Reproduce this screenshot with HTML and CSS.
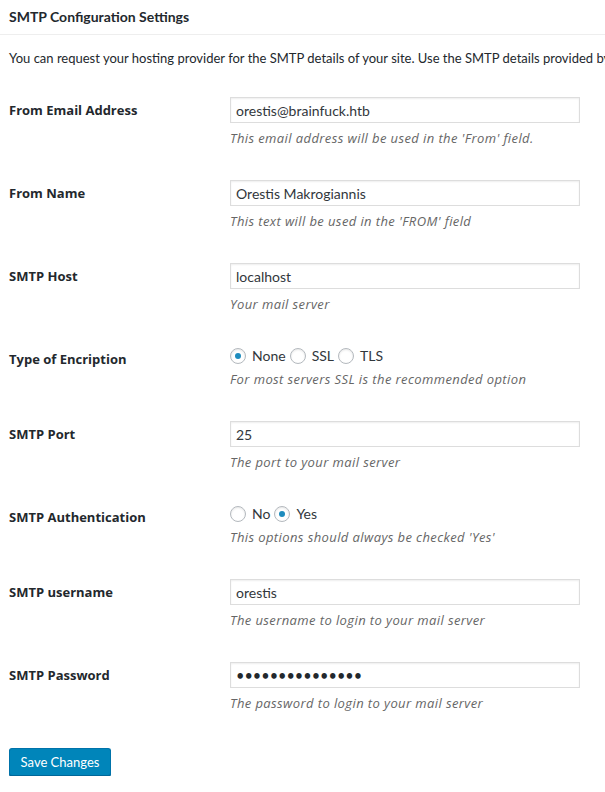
FILE: index.html
```html
<!DOCTYPE html>
<html>
<head>
<meta charset="utf-8">
<link rel="stylesheet" href="styles.css">
</head>
<body>
<div class="page">
  <div class="head"><h3 class="title">SMTP Configuration Settings</h3></div>
  <p class="intro">You can request your hosting provider for the SMTP details of your site. Use the SMTP details provided by your hosting provider to configure the following settings.</p>
  <div class="form">
    <div class="row">
      <div class="label">From Email Address</div>
      <div class="field">
        <input class="text" type="text" value="orestis@brainfuck.htb">
        <p class="desc">This email address will be used in the 'From' field.</p>
      </div>
    </div>
    <div class="row">
      <div class="label">From Name</div>
      <div class="field">
        <input class="text" type="text" value="Orestis Makrogiannis">
        <p class="desc">This text will be used in the 'FROM' field</p>
      </div>
    </div>
    <div class="row">
      <div class="label">SMTP Host</div>
      <div class="field">
        <input class="text" type="text" value="localhost">
        <p class="desc">Your mail server</p>
      </div>
    </div>
    <div class="row">
      <div class="label">Type of Encription</div>
      <div class="field">
        <div class="radios">
          <span class="radio checked"></span><span class="opt">None</span><span class="radio"></span><span class="opt">SSL</span><span class="radio"></span><span class="opt">TLS</span>
        </div>
        <p class="desc">For most servers SSL is the recommended option</p>
      </div>
    </div>
    <div class="row">
      <div class="label">SMTP Port</div>
      <div class="field">
        <input class="text" type="text" value="25">
        <p class="desc">The port to your mail server</p>
      </div>
    </div>
    <div class="row">
      <div class="label">SMTP Authentication</div>
      <div class="field">
        <div class="radios">
          <span class="radio"></span><span class="opt">No</span><span class="radio checked"></span><span class="opt">Yes</span>
        </div>
        <p class="desc">This options should always be checked 'Yes'</p>
      </div>
    </div>
    <div class="row">
      <div class="label">SMTP username</div>
      <div class="field">
        <input class="text" type="text" value="orestis">
        <p class="desc">The username to login to your mail server</p>
      </div>
    </div>
    <div class="row">
      <div class="label">SMTP Password</div>
      <div class="field">
        <input class="text pass" type="password" value="kIEnnfEKJ#)$LNx">
        <p class="desc">The password to login to your mail server</p>
      </div>
    </div>
  </div>
  <div class="actions"><button class="button">Save Changes</button></div>
</div>
</body>
</html>
```

FILE: styles.css
```css
* { box-sizing: border-box; }
html, body { margin: 0; padding: 0; background: #fff; }
body {
  font-family: Lato, "Open Sans", sans-serif;
  font-size: 13px;
  color: #23282d;
  overflow: hidden;
}
.page { width: 605px; overflow: hidden; }
.head {
  height: 35px;
  border-bottom: 1px solid #eeeeee;
  padding-left: 9px;
  display: flex;
  align-items: center;
}
.title { margin: 0; font-size: 14px; font-weight: 700; line-height: 18px; }
.intro {
  margin: 0;
  padding: 14px 0 0 9px;
  height: 47px;
  line-height: 18px;
  white-space: nowrap;
  overflow: hidden;
}
.form { padding-left: 9px; }
.row {
  display: flex;
  padding: 15px 0;
}
.label {
  width: 221px;
  padding-top: 20px;
  line-height: 16px;
  font-family: "Open Sans", sans-serif;
  font-weight: 700;
  font-size: 13px;
  margin-top: -15px;
}
.field { width: 350px; }
.text {
  display: block;
  width: 350px;
  height: 26px;
  margin: 0;
  padding: 0 5px;
  border: 1px solid #dddddd;
  box-shadow: inset 0 1px 2px rgba(0,0,0,0.07);
  background: #fff;
  font-family: inherit;
  font-size: 14px;
  color: #32373c;
  outline: none;
}
.pass { font-size: 14.5px; color: #23282d; }
.desc {
  margin: 4px 0 0;
  line-height: 23px;
  height: 23px;
  font-family: "Open Sans", sans-serif;
  font-style: italic;
  color: #666666;
  font-size: 13px;
  letter-spacing: 0.4px;
  white-space: nowrap;
}
.radios {
  display: flex;
  align-items: flex-start;
  height: 18px;
}
.radio {
  width: 16px;
  height: 16px;
  margin-top: 2px;
  border: 1px solid #b4b9be;
  border-radius: 50%;
  box-shadow: inset 0 1px 2px rgba(0,0,0,0.1);
  background: #fff;
  display: flex;
  align-items: center;
  justify-content: center;
  flex: none;
}
.radio.checked::after {
  content: "";
  width: 6px;
  height: 6px;
  border-radius: 50%;
  background: #1e8cbe;
}
.opt {
  padding-left: 6px;
  padding-right: 4px;
  font-size: 14px;
  line-height: 20px;
  color: #32373c;
}
.actions { padding: 0 0 0 9px; margin-top: 18px; }
.button {
  height: 28px;
  width: 102px;
  padding: 0 10px 1px;
  border: 1px solid #0073aa;
  border-bottom-color: #006799;
  border-radius: 3px;
  background: #0085ba;
  box-shadow: 0 1px 0 #006799;
  color: #fff;
  font-family: inherit;
  font-size: 13px;
  cursor: pointer;
}
```
